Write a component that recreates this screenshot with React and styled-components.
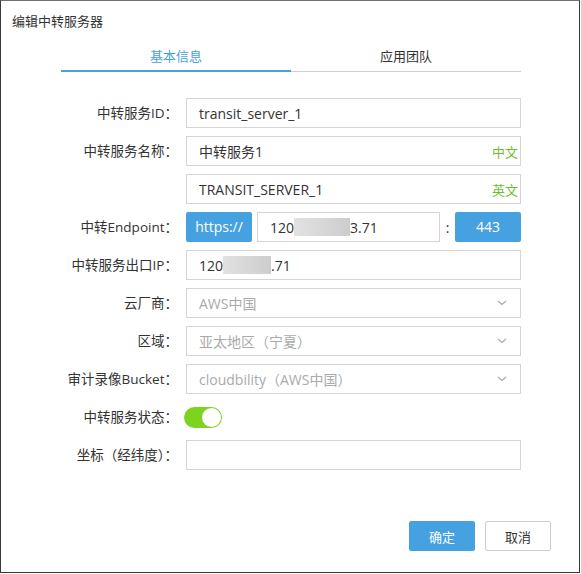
import styled, { createGlobalStyle } from 'styled-components';

const GlobalStyle = createGlobalStyle`
    body {
        margin: 0;
        background: #fff;
        font-family: "Open Sans", "Noto Sans CJK SC", sans-serif;
    }
`;

const BLUE = '#45a1e0';
const GREEN = '#6cbf2c';

const ChevronDown = () => (
    <svg width="10" height="6" viewBox="0 0 10 6" fill="none">
        <path d="M1 1l4 3.5L9 1" stroke="#a8a8a8" strokeWidth="1.2" />
    </svg>
);

const App = () => {
    return (
        <>
        <GlobalStyle />
        <Dialog>
            <Title>编辑中转服务器</Title>
            <Tabs>
                <Tab active>基本信息</Tab>
                <Tab>应用团队</Tab>
            </Tabs>
            <Form>
                <Label>中转服务ID：</Label>
                <Field><Value>transit_server_1</Value></Field>

                <Label>中转服务名称：</Label>
                <Field><Value>中转服务1</Value><Suffix>中文</Suffix></Field>

                <Label />
                <Field><Value>TRANSIT_SERVER_1</Value><Suffix>英文</Suffix></Field>

                <Label>中转Endpoint：</Label>
                <EndpointRow>
                    <BlueBox>https://</BlueBox>
                    <Field grow><Value>120<Redacted width={56} />3.71</Value></Field>
                    <Colon>:</Colon>
                    <BlueBox>443</BlueBox>
                </EndpointRow>

                <Label>中转服务出口IP：</Label>
                <Field><Value>120<Redacted width={48} />.71</Value></Field>

                <Label>云厂商：</Label>
                <Field><Value muted>AWS中国</Value><ChevronDown /></Field>

                <Label>区域：</Label>
                <Field><Value muted>亚太地区（宁夏）</Value><ChevronDown /></Field>

                <Label>审计录像Bucket：</Label>
                <Field><Value muted>cloudbility（AWS中国）</Value><ChevronDown /></Field>

                <Label>中转服务状态：</Label>
                <SwitchCell><Switch><Knob /></Switch></SwitchCell>

                <Label>坐标（经纬度）：</Label>
                <Field />
            </Form>
            <Footer>
                <Button primary>确定</Button>
                <Button>取消</Button>
            </Footer>
        </Dialog>
        </>
    );
};

export default App;

const Dialog = styled.div`
    width: 580px;
    height: 573px;
    box-sizing: border-box;
    border: 1px solid #3a3a3a;
    border-top-color: #707070;
    display: flex;
    flex-direction: column;
    background: #fff;
`;

const Title = styled.div`
    padding: 11px 0 0 11px;
    font-size: 13px;
    line-height: 18px;
    color: #333;
`;

const Tabs = styled.div`
    display: flex;
    margin: 14px 0 0 60px;
    width: 460px;
    border-bottom: 1px solid #cfcfcf;
`;

const Tab = styled.div`
    flex: 1;
    text-align: center;
    font-size: 13px;
    height: 26px;
    line-height: 24px;
    color: ${props => props.active ? BLUE : '#333'};
    border-bottom: 2px solid ${props => props.active ? BLUE : 'transparent'};
    margin-bottom: -1px;
`;

const Form = styled.div`
    display: grid;
    grid-template-columns: 177px 335px;
    column-gap: 8px;
    row-gap: 8px;
    margin-top: 26px;
`;

const Label = styled.div`
    text-align: right;
    font-size: 13.5px;
    line-height: 30px;
    color: #333;
    white-space: nowrap;
`;

const Field = styled.div`
    display: flex;
    align-items: center;
    height: 30px;
    box-sizing: border-box;
    border: 1px solid #d4d4d4;
    padding: 0 13px 0 12px;
    ${props => props.grow ? 'flex: 1;' : ''}
    min-width: 0;
`;

const Value = styled.span`
    flex: 1;
    display: flex;
    align-items: center;
    font-size: 14px;
    color: ${props => props.muted ? '#aaa' : '#333'};
    white-space: nowrap;
`;

const Suffix = styled.span`
    font-size: 13px;
    color: ${GREEN};
    margin-right: -13px;
    padding-right: 2px;
`;

const Redacted = styled.span`
    display: inline-block;
    width: ${props => props.width}px;
    height: 18px;
    background: linear-gradient(90deg, #e2e2e2, #cdcdcd);
`;

const EndpointRow = styled.div`
    display: flex;
    align-items: center;
    height: 30px;
`;

const BlueBox = styled.div`
    width: 66px;
    height: 30px;
    box-sizing: border-box;
    background: ${BLUE};
    color: #fff;
    border-radius: 2px;
    font-size: 14px;
    line-height: 30px;
    text-align: center;
    margin-right: 5px;
    &:last-child {
        margin-right: 0;
    }
`;

const Colon = styled.span`
    width: 15px;
    text-align: center;
    font-size: 14px;
    color: #333;
`;

const SwitchCell = styled.div`
    height: 30px;
    display: flex;
    align-items: center;
    margin-left: -2px;
`;

const Switch = styled.div`
    width: 38px;
    height: 21px;
    border-radius: 11px;
    background: #7ed321;
    display: flex;
    justify-content: flex-end;
    align-items: center;
    padding: 0 1px;
    box-sizing: border-box;
`;

const Knob = styled.div`
    width: 19px;
    height: 19px;
    border-radius: 50%;
    background: #fff;
`;

const Footer = styled.div`
    margin-top: auto;
    display: flex;
    justify-content: flex-end;
    gap: 10px;
    padding: 0 28px 21px 0;
`;

const Button = styled.button`
    width: 66px;
    height: 30px;
    box-sizing: border-box;
    font-family: "Noto Sans CJK SC", sans-serif;
    font-size: 13px;
    border-radius: 2px;
    border: 1px solid ${props => props.primary ? BLUE : '#cfcfcf'};
    background: ${props => props.primary ? BLUE : '#fff'};
    color: ${props => props.primary ? '#fff' : '#333'};
    padding: 0;
`;
